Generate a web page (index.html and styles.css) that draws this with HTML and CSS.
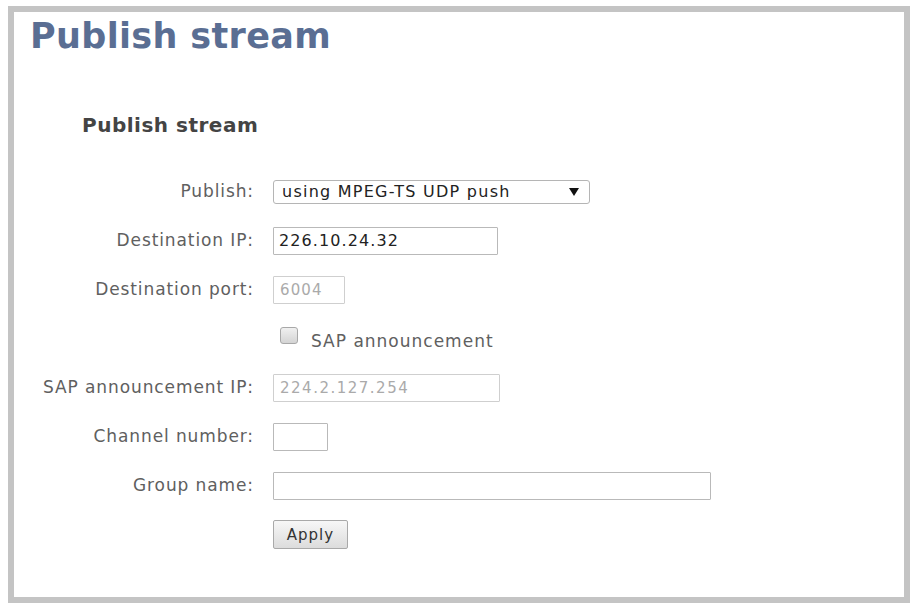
FILE: index.html
```html
<!DOCTYPE html>
<html lang="en">
<head>
  <meta charset="UTF-8" />
  <title>Publish stream</title>
  <link rel="stylesheet" href="styles.css">
</head>
<body>

  <div class="panel">
    <h1 class="page-title">Publish stream</h1>
    <h2 class="section-title">Publish stream</h2>

    <!-- Stream form -->
    <form class="stream-form">
      <label for="publishType">Publish:</label>
      <div class="select-wrap">
        <select id="publishType">
          <option>using MPEG-TS UDP push</option>
          <option>using RTMP push</option>
          <option>using RTSP announce</option>
        </select>
        <span class="select-arrow"></span>
      </div>

      <label for="destIp">Destination IP:</label>
      <input type="text" id="destIp" class="w-ip" value="226.10.24.32" />

      <label for="destPort">Destination port:</label>
      <input type="text" id="destPort" class="w-port" value="6004" disabled />

      <span></span>
      <div class="check-row">
        <input type="checkbox" id="sapEnable" />
        <label for="sapEnable">SAP announcement</label>
      </div>

      <label for="sapIp">SAP announcement IP:</label>
      <input type="text" id="sapIp" class="w-sap" value="224.2.127.254" disabled />

      <label for="channel">Channel number:</label>
      <input type="text" id="channel" class="w-channel" />

      <label for="groupName">Group name:</label>
      <input type="text" id="groupName" class="w-group" />

      <span></span>
      <div><button type="button" class="apply-btn">Apply</button></div>
    </form>
  </div>

</body>
</html>
```

FILE: styles.css
```css
body {
  margin: 0;
  background: #fff;
  font-family: "DejaVu Sans", Verdana, sans-serif;
  color: #555;
}
.panel {
  box-sizing: border-box;
  width: 902px;
  height: 597px;
  margin: 6px 0 0 8px;
  border: 6px solid #c4c4c4;
  background: #fff;
}
.page-title {
  margin: 4px 0 0 16px;
  font-size: 35px;
  line-height: normal;
  font-weight: bold;
  letter-spacing: 0.35px;
  color: #5a6e93;
}
.section-title {
  margin: 57px 0 0 68px;
  font-size: 20px;
  line-height: normal;
  font-weight: bold;
  letter-spacing: 0.5px;
  color: #444;
}
.stream-form {
  display: grid;
  grid-template-columns: 240px auto;
  grid-auto-rows: 29px;
  column-gap: 19px;
  row-gap: 20px;
  align-items: center;
  justify-items: start;
  margin-top: 40px;
}
.stream-form > label {
  justify-self: end;
  margin-top: -1px;
  font-size: 17px;
  letter-spacing: 0.9px;
  color: #606060;
}
input[type="text"] {
  box-sizing: border-box;
  height: 28px;
  padding: 0 5px;
  border: 1px solid #b9b9b9;
  border-radius: 1px;
  font-family: "DejaVu Sans", Verdana, sans-serif;
  font-size: 16px;
  letter-spacing: 1.1px;
  color: #222;
  background: #fff;
}
input[type="text"]:disabled {
  padding-left: 6px;
  font-size: 15px;
  color: #aaa;
  border-color: #cfcfcf;
  background: #fff;
}
#sapIp { letter-spacing: 1.5px; }
.w-ip { width: 225px; }
.w-port { width: 72px; }
.w-sap { width: 227px; }
.w-channel { width: 55px; }
.w-group { width: 438px; }
.select-wrap {
  position: relative;
}
.select-wrap select {
  appearance: none;
  -webkit-appearance: none;
  box-sizing: border-box;
  width: 317px;
  height: 24px;
  padding: 0 0 0 8px;
  border: 1px solid #b5b5b5;
  border-radius: 3px;
  background: #fff;
  font-family: "DejaVu Sans", Verdana, sans-serif;
  font-size: 16px;
  letter-spacing: 1.25px;
  color: #222;
}
.select-arrow {
  position: absolute;
  right: 11px;
  top: 8px;
  width: 0;
  height: 0;
  border-left: 5px solid transparent;
  border-right: 5px solid transparent;
  border-top: 8px solid #111;
  pointer-events: none;
}
.check-row {
  display: flex;
  align-items: center;
  gap: 13px;
  padding-left: 7px;
  font-size: 17px;
  letter-spacing: 1px;
  color: #606060;
}
.check-row input {
  appearance: none;
  -webkit-appearance: none;
  width: 18px;
  height: 17px;
  margin: -6px 0 0 0;
  border: 1px solid #a8a8a8;
  border-radius: 3px;
  background: linear-gradient(#f0f0f0, #d4d4d4);
}
.check-row label {
  padding-top: 4px;
}
.apply-btn {
  box-sizing: border-box;
  width: 75px;
  height: 29px;
  border: 1px solid #a9a9a9;
  border-radius: 2px;
  background: linear-gradient(#f7f7f7, #dcdcdc);
  font-family: "DejaVu Sans", Verdana, sans-serif;
  font-size: 15px;
  letter-spacing: 1px;
  color: #333;
  cursor: pointer;
}
```
